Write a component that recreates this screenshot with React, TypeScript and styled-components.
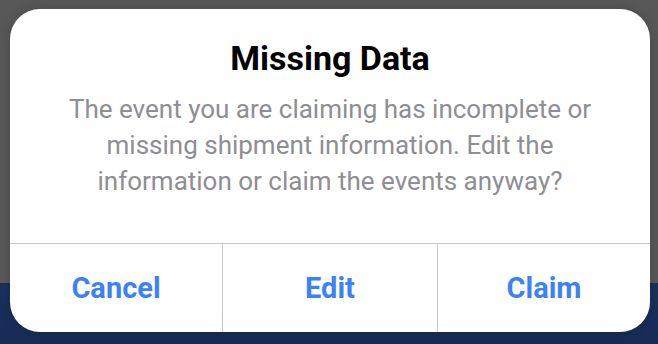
import React from 'react';
import styled, { createGlobalStyle } from 'styled-components';

const GlobalStyle = createGlobalStyle`
  html, body {
    margin: 0;
    padding: 0;
  }
  body {
    font-family: Roboto, "Noto Sans", "Liberation Sans", sans-serif;
    -webkit-font-smoothing: antialiased;
  }
`;

const Backdrop = styled.div`
  width: 658px;
  height: 344px;
  box-sizing: border-box;
  padding: 9px 8px 12px 10px;
  background: linear-gradient(to bottom, #585858 0, #585858 283px, #1a315c 283px, #172c55 344px);
  display: flex;
`;

const Dialog = styled.div`
  flex: 1;
  background-color: #ffffff;
  border-radius: 30px;
  overflow: hidden;
  display: flex;
  flex-direction: column;
  box-shadow: 0 0 12px rgba(0, 0, 0, 0.18);
`;

const Body = styled.div`
  height: 234px;
  box-sizing: border-box;
  padding: 30px 36px 0;
  text-align: center;
`;

const Title = styled.h2`
  margin: 0;
  font-size: 34px;
  line-height: 38px;
  font-weight: 700;
  color: #000000;
`;

const Message = styled.p`
  margin: 14px 0 0;
  font-size: 26px;
  line-height: 36px;
  font-weight: 400;
  color: #8e8e93;
`;

const Actions = styled.div`
  flex: 1;
  display: grid;
  grid-template-columns: 212px 215px 1fr;
  border-top: 1px solid #c8c7cc;
`;

const ActionButton = styled.button`
  border: none;
  background: transparent;
  margin: 0;
  padding: 0;
  font-family: inherit;
  font-size: 29px;
  font-weight: 700;
  color: #3d82f5;
  cursor: pointer;

  & + & {
    border-left: 1px solid #c8c7cc;
  }
`;

const App: React.FC = () => {
  return (
    <>
      <GlobalStyle />
      <Backdrop>
        <Dialog>
          <Body>
            <Title>Missing Data</Title>
            <Message>
              The event you are claiming has incomplete or missing shipment
              information. Edit the information or claim the events anyway?
            </Message>
          </Body>
          <Actions>
            <ActionButton>Cancel</ActionButton>
            <ActionButton>Edit</ActionButton>
            <ActionButton>Claim</ActionButton>
          </Actions>
        </Dialog>
      </Backdrop>
    </>
  );
};

export default App;
